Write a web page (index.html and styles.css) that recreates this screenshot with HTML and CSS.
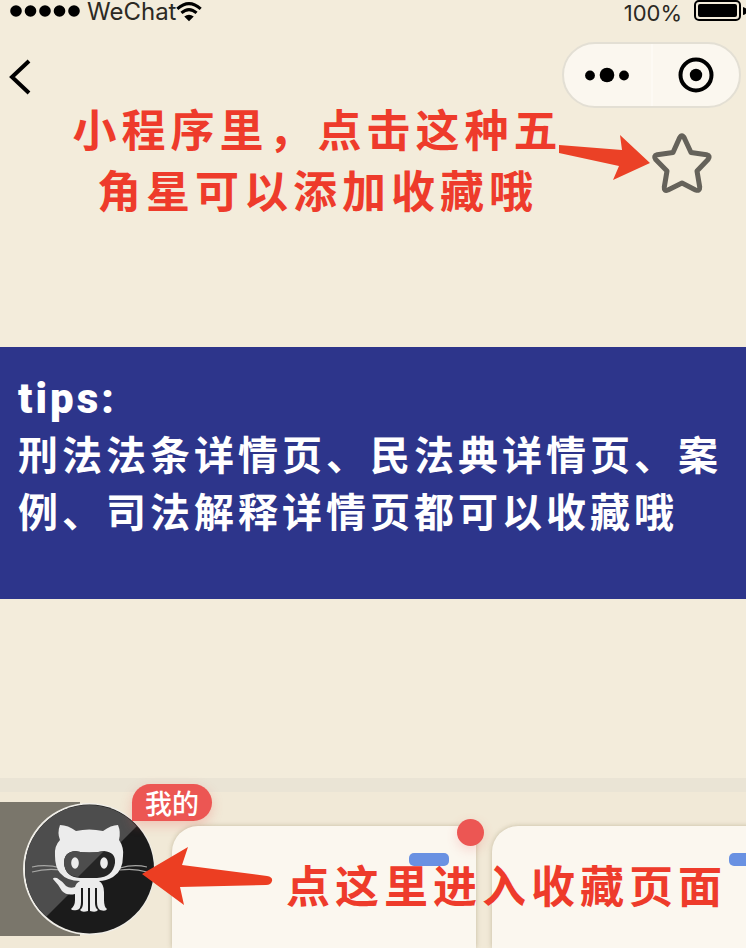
FILE: index.html
```html
<!DOCTYPE html>
<html lang="zh-CN">
<head>
<meta charset="utf-8">
<meta name="viewport" content="width=device-width, initial-scale=1">
<title>收藏</title>
<link rel="stylesheet" href="styles.css">
</head>
<body>
<header class="status">
  <div class="carrier">
    <svg class="signal" viewBox="0 0 70 12" aria-hidden="true"><circle cx="6" cy="6" r="5.8"/><circle cx="20.5" cy="6" r="5.8"/><circle cx="35" cy="6" r="5.8"/><circle cx="49.5" cy="6" r="5.8"/><circle cx="64" cy="6" r="5.8"/></svg>
    <span class="carrier-name">WeChat</span>
    <svg class="wifi" viewBox="0 0 24 20" aria-hidden="true"><path d="M1.2 7.2Q12 -2.4 22.8 7.2M5 11Q12 4.8 19 11" fill="none" stroke="#000" stroke-width="2.8"/><path d="M7.6 14.4Q12 10.8 16.4 14.4L12 18.6Z"/></svg>
  </div>
  <div class="power">
    <span>100%</span>
    <svg class="battery" viewBox="0 0 52 22" aria-hidden="true"><rect x="1" y="1" width="45" height="19" rx="4" fill="none" stroke="#000" stroke-width="2"/><rect x="4" y="4" width="39" height="13" rx="2"/><path d="M49 7Q53 8 53 11T49 15Z"/></svg>
  </div>
</header>

<nav class="nav">
  <button class="back" type="button" aria-label="返回"><svg viewBox="0 0 24 36" aria-hidden="true"><path d="M20 2L3 18L20 34" fill="none" stroke="#000" stroke-width="4"/></svg></button>
  <div class="capsule">
    <button type="button" aria-label="更多"><svg class="more" viewBox="0 0 44 16" aria-hidden="true"><circle cx="5" cy="8.500" r="4.900"/><circle cx="22" cy="8" r="7.300"/><circle cx="39" cy="8.500" r="4.900"/></svg></button>
    <button type="button" aria-label="关闭"><svg class="target" viewBox="0 0 36 36" aria-hidden="true"><circle cx="18" cy="18" r="15.500" fill="none" stroke="#000" stroke-width="4"/><circle cx="18" cy="18" r="6.200"/></svg></button>
  </div>
</nav>

<main>
  <section class="intro">
    <h1 class="note">小程序里，点击这种五<br>角星可以添加收藏哦</h1>
    <svg class="arrow" viewBox="0 0 91 46" aria-hidden="true"><path d="M0 10L63 15L61 0L91 28L54 45L60 31L0 18Z"/></svg>
    <button class="star" type="button" aria-label="收藏"><svg viewBox="0 0 60 60" aria-hidden="true"><path d="M27.500 5Q30 .6 32.300 5L39 19.500L54.500 21.700Q59 22.800 56 26.600L45 38L47.700 54Q48 58.500 43.500 57L30 50L16 57Q11.800 58.500 12.300 54L15 38L3.700 26.600Q1 22.800 5.200 21.700L21 19.500Z"/></svg></button>
  </section>

  <section class="tips">
    <h2>tips:</h2>
    <p>刑法法条详情页、民法典详情页、案例、司法解释详情页都可以收藏哦</p>
  </section>
</main>

<footer class="shelf">
  <div class="profile">
    <button class="avatar" type="button" aria-label="我的">
      <svg viewBox="0 0 134 134" aria-hidden="true">
        <defs><clipPath id="disc"><circle cx="67" cy="67" r="64"/></clipPath></defs>
        <circle cx="67" cy="67" r="66" fill="#f0eee8"/>
        <circle cx="67.500" cy="67" r="64.500" fill="#1b1b1b"/>
        <path d="M0 0H134V5L20 119H0Z" fill="#4d4d4d" clip-path="url(#disc)"/>
        <g fill="none" stroke="#a6a6a4" stroke-width="1.200"><path d="M10 65Q24 62 39 66M10 70Q24 66 39 68M98 66Q112 62 125 65M98 68Q112 66 125 70"/></g>
        <path fill="#ececec" d="M38 23Q46 23 54 29Q67 26 81 29Q89 23 96 23Q99 30 97 38Q102 45 101 54Q101 69 91 75Q84 79 77 79Q82 82 82 90V98Q82 105 85 107Q84 110 78 108Q75 106 75 100V86H73V101Q73 106 76 108Q74 111 68 109V86H66V109Q60 111 58 108Q61 106 61 101V86H59V100Q59 107 55 108Q50 109 49 107Q53 104 53 98V92Q45 94 40 89Q36 82 31 77Q31 75 35 76Q40 79 44 84Q48 87 53 85Q54 81 58 79Q45 79 38 71Q33 65 33 54Q32 44 38 38Q35 31 38 23Z"/>
        <path d="M53 49Q67 52 82 49Q94 50 93 61Q91 75 75 76H58Q43 75 42 61Q42 50 53 49Z" fill="#252525"/>
        <path d="M53 49Q67 52 82 49L56 75Q43 74 42 61Q42 50 53 49Z" fill="#4d4d4d"/>
        <ellipse cx="53" cy="61" rx="3.800" ry="5.800" fill="#ececec"/><ellipse cx="82" cy="61" rx="3.800" ry="5.800" fill="#ececec"/>
      </svg>
    </button>
    <span class="badge">我的</span>
  </div>
  <div class="cards">
    <article class="card"><span class="pill"></span><span class="dot"></span></article>
    <article class="card"><span class="pill"></span></article>
  </div>
  <div class="callout">
    <svg class="arrow-left" viewBox="0 0 132 60" aria-hidden="true"><path d="M0 28L46 1L40 19L125 30Q131 31 130 35Q129 39 124 39L38 41L42 59Z"/></svg>
    <p class="note">点这里进入收藏页面</p>
  </div>
</footer>
</body>
</html>
```
FILE: styles.css
```css
* {
  box-sizing: border-box;
}

body {
  margin: 0;
  min-height: 100vh;
  display: flex;
  flex-direction: column;
  background: #f3ecdb;
  color: #000;
  font-family: Inter, "Noto Sans CJK SC", sans-serif;
}

button {
  padding: 0;
  border: 0;
  background: none;
  color: inherit;
  display: flex;
  align-items: center;
  justify-content: center;
}

h1, h2, p {
  margin: 0;
}

svg {
  display: block;
  flex: none;
}

.status {
  height: 24px;
  display: flex;
  justify-content: space-between;
  align-items: flex-start;
  padding-left: 10px;
  font-size: 24px;
  line-height: 24px;
  color: #2b2923;
}

.carrier, .power {
  display: flex;
  align-items: flex-start;
}

.signal {
  width: 70px;
  margin-top: 5px;
  margin-right: 7px;
}

.wifi {
  width: 26px;
  margin-top: 1px;
}

.power {
  font-size: 22px;
  line-height: 26px;
  gap: 12px;
}

.battery {
  width: 52px;
}

.nav {
  display: flex;
  justify-content: space-between;
  align-items: center;
  padding: 18px 5px 0 9px;
}

.back svg {
  width: 24px;
}

.back {
  padding-top: 3px;
}

.capsule {
  display: flex;
  width: 179px;
  height: 66px;
  border: 2px solid #e3dfd4;
  border-radius: 33px;
  background: #fbf7ef;
}

.capsule button {
  flex: 1;
}

.capsule button + button {
  border-left: 2px solid #fdfaf4;
}

.more {
  width: 44px;
}

.target {
  width: 36px;
}

.intro {
  display: flex;
  align-items: flex-start;
  padding: 0 34px 0 72px;
  min-height: 239px;
}

.note {
  color: #ee3b2b;
  font-family: "Noto Sans CJK SC", sans-serif;
  font-size: 44px;
  font-weight: 700;
  line-height: 61px;
  letter-spacing: 5px;
  text-align: center;
  white-space: nowrap;
}

.intro .note {
  flex: 1;
  margin: -10px -4px 0 0;
}

.arrow {
  width: 91px;
  margin-top: 27px;
  fill: #eb4126;
}

.star {
  margin: 25px 0 0 2px;
}

.star svg {
  width: 60px;
  fill: none;
  stroke: #65625a;
  stroke-width: 5;
  stroke-linejoin: round;
  overflow: visible;
}

.tips {
  padding: 25px 18px 60px;
  background: #2d358b;
  color: #fff;
  font-size: 40px;
  font-weight: 700;
  line-height: 57px;
  letter-spacing: 4px;
}

.tips h2 {
  font-family: Roboto, sans-serif;
  font-size: 42px;
  font-weight: 900;
  line-height: 53px;
  letter-spacing: 3px;
}

.tips p {
  font-family: "Noto Sans CJK SC", sans-serif;
  margin-right: -18px;
}

.shelf {
  position: relative;
  display: flex;
  gap: 16px;
  height: 170px;
  margin-top: auto;
  border-top: 14px solid #eae4d5;
  background: #f1e9d7;
}

.profile {
  position: relative;
  flex: none;
  width: 156px;
  height: 134px;
  margin-top: 10px;
  padding-left: 22px;
  background: linear-gradient(#7a766b, #7a766b) no-repeat 0 0 / 80px 100%;
}

.avatar svg {
  width: 134px;
}

.badge {
  position: absolute;
  left: 132px;
  top: -18px;
  padding: 0 13px;
  border-radius: 19px 19px 19px 0;
  background: #ec5653;
  color: #fff;
  font-family: "Noto Sans CJK SC", sans-serif;
  font-size: 27px;
  font-weight: 500;
  line-height: 37px;
  white-space: nowrap;
  box-shadow: 0 4px 12px #ec565344;
}

.cards {
  flex: 1;
  min-width: 0;
  display: flex;
  gap: 16px;
  margin-left: -16px;
  padding: 34px 0 0 16px;
  overflow: hidden;
}

.card {
  position: relative;
  flex: none;
  width: 304px;
  padding: 27px;
  border-radius: 26px 26px 0 0;
  background: #fbf7ef;
  box-shadow: 0 0 5px #82754e66;
}

.card:first-child {
  border-top-right-radius: 16px;
}

.pill {
  display: block;
  width: 40px;
  height: 13px;
  margin-left: auto;
  border-radius: 5px;
  background: #6991e2;
}

.dot {
  position: absolute;
  right: -8px;
  top: -7px;
  width: 27px;
  height: 27px;
  border-radius: 50%;
  background: #ec5653;
  box-shadow: 0 4px 12px #ec565333;
}

.callout {
  position: absolute;
  left: 142px;
  top: 54px;
  display: flex;
  align-items: flex-start;
  gap: 12px;
}

.callout .note {
  padding-top: 8px;
}

.arrow-left {
  width: 132px;
  fill: #ec3e22;
}
```
